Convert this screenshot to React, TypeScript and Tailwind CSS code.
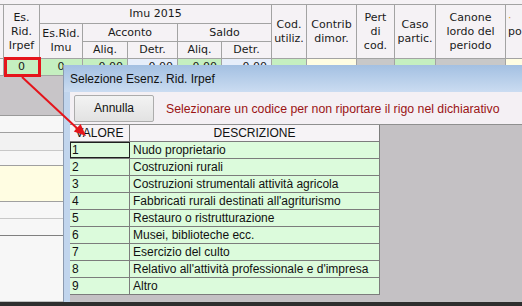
const head = "border-r border-b border-[#a3a3a3] bg-[#f5f2f5] flex flex-col items-center justify-center text-center leading-[14px]";

const rows = [
  { v: "1", d: "Nudo proprietario" },
  { v: "2", d: "Costruzioni rurali" },
  { v: "3", d: "Costruzioni strumentali attività agricola" },
  { v: "4", d: "Fabbricati rurali destinati all'agriturismo" },
  { v: "5", d: "Restauro o ristrutturazione" },
  { v: "6", d: "Musei, biblioteche ecc." },
  { v: "7", d: "Esercizio del culto" },
  { v: "8", d: "Relativo all'attività professionale e d'impresa" },
  { v: "9", d: "Altro" },
];

function Grid() {
  return (
    <div
      className="grid grid-cols-[4px_36px_43px_45px_50px_44px_50px_35px_50px_38px_41px_70px_1fr] grid-rows-[19px_18px_17px_17px] text-[11px] text-[#1a1a1a] font-['DejaVu_Sans',sans-serif]"
    >
      <div className={`${head} row-span-3`} />
      <div className={`${head} row-span-3`}>
        <span>Es.</span>
        <span>Rid.</span>
        <span>Irpef</span>
      </div>
      <div className={`${head} col-span-5`}>Imu 2015</div>
      <div className={`${head} row-span-3`}>
        <span>Cod.</span>
        <span>utiliz.</span>
      </div>
      <div className={`${head} row-span-3`}>
        <span>Contrib</span>
        <span>dimor.</span>
      </div>
      <div className={`${head} row-span-3`}>
        <span>Pert</span>
        <span>di</span>
        <span>cod.</span>
      </div>
      <div className={`${head} row-span-3`}>
        <span>Caso</span>
        <span>partic.</span>
      </div>
      <div className={`${head} row-span-3`}>
        <span>Canone</span>
        <span>lordo del</span>
        <span>periodo</span>
      </div>
      <div className={`${head} row-span-3 !items-start pl-[2px]`}>
        <span className="text-[#e0a030]">·</span>
        <span>po</span>
        <span>&nbsp;</span>
      </div>
      <div className={`${head} row-span-2`}>
        <span>Es.Rid.</span>
        <span>Imu</span>
      </div>
      <div className={`${head} col-span-2`}>Acconto</div>
      <div className={`${head} col-span-2`}>Saldo</div>
      <div className={head}>Aliq.</div>
      <div className={head}>Detr.</div>
      <div className={head}>Aliq.</div>
      <div className={head}>Detr.</div>

      {/* data row */}
      <div className="border-r border-b border-[#a3a3a3] bg-[#f2f2f2]" />
      <div className="border-r border-b border-[#a3a3a3] bg-[#c5efc0] flex items-center justify-center">0</div>
      <div className="border-r border-b border-[#a3a3a3] bg-[#c5efc0] flex items-center justify-center">0</div>
      <div className="border-r border-b border-[#a3a3a3] bg-[#c5efc0] flex items-center justify-end pr-1">0,00</div>
      <div className="border-r border-b border-[#a3a3a3] bg-[#e6eefa] flex items-center justify-end pr-1">0,00</div>
      <div className="border-r border-b border-[#a3a3a3] bg-[#c5efc0] flex items-center justify-end pr-1">0,00</div>
      <div className="border-r border-b border-[#a3a3a3] bg-[#e6eefa] flex items-center justify-end pr-1">0,00</div>
      <div className="border-r border-b border-[#a3a3a3] bg-[#c5efc0]" />
      <div className="border-r border-b border-[#a3a3a3] bg-[#fffde2]" />
      <div className="border-r border-b border-[#a3a3a3] bg-[#c8c8c8]" />
      <div className="border-r border-b border-[#a3a3a3] bg-[#c5efc0]" />
      <div className="border-r border-b border-[#a3a3a3] bg-[#c8c8c8]" />
      <div className="border-b border-[#a3a3a3] bg-[#fffde2]" />
    </div>
  );
}

function Dialog() {
  return (
    <div className="absolute left-[63px] top-[65px] right-0 bottom-[4px] flex border-l border-[#8c9bb0] bg-[#c1d5ed] font-['Liberation_Sans',sans-serif]">
      <div className="flex flex-col flex-1">
        <div className="h-[27px] shrink-0 bg-gradient-to-b from-[#a3c0e2] to-[#cbdcf1] flex items-center pl-[6px] text-[12px] text-[#111]">
          Selezione Esenz. Rid. Irpef
        </div>
        <div className="flex flex-1 pl-[6px]">
          <div className="flex flex-col flex-1">
            <div className="h-[32px] shrink-0 bg-[#f4f0f4] flex items-center pl-[4px] gap-[12px]">
              <div className="w-[80px] h-[27px] border border-[#acacac] rounded-[2px] bg-gradient-to-b from-[#f3f3f3] to-[#e2e2e2] flex items-center justify-center text-[12px] text-[#111]">
                Annulla
              </div>
              <span className="text-[12.3px] text-[#9b1414] mt-[3px]">
                Selezionare un codice per non riportare il rigo nel dichiarativo
              </span>
            </div>
            <div className="flex-1 bg-[#c4c1c4] border-t border-[#8f8f8f]">
              <div className="w-[310px] text-[12px] text-[#111]">
                <div className="flex h-[17px] bg-[#f6f3f6] border-b border-[#7c7c7c]">
                  <div className="w-[60px] border-r border-[#7c7c7c] flex items-center justify-center">VALORE</div>
                  <div className="flex-1 border-r border-[#7c7c7c] flex items-center justify-center">DESCRIZIONE</div>
                </div>
                {rows.map((r, i) => (
                  <div key={r.v} className="flex h-[17px] bg-[#dcfbdc] border-b border-[#7c7c7c]">
                    <div
                      className={`w-[60px] border-r border-[#7c7c7c] flex items-center pl-[2px] ${i === 0 ? "outline outline-1 outline-[#202020] -outline-offset-1" : ""}`}
                    >
                      {r.v}
                    </div>
                    <div className="flex-1 border-r border-[#7c7c7c] flex items-center pl-[3px]">{r.d}</div>
                  </div>
                ))}
              </div>
            </div>
          </div>
        </div>
      </div>
    </div>
  );
}

export default function App() {
  return (
    <div className="relative w-[522px] h-[306px] overflow-hidden bg-[#f7f7f7] flex flex-col">
      <div className="h-[5px] bg-[#f5f2f5] border-b border-[#a3a3a3]" />
      <Grid />
      {/* left area below grid */}
      <div className="flex-1 flex flex-col">
        <div className="h-[40px] bg-[#c8c5c8] border-b border-[#9a9a9a]" />
        <div className="h-[17px] bg-[#f7f7f7] border-b border-[#a0a0a0]" />
        <div className="h-[18px] bg-[#f2f2f2] border-b border-[#c8c8c8]" />
        <div className="h-[15px] bg-[#f7f7f7] border-b border-[#a0a0a0]" />
        <div className="h-[36px] bg-[#fffde2] border-b border-[#a0a0a0]" />
        <div className="h-[17px] bg-[#f7f7f7] border-b border-[#c8c8c8]" />
        <div className="h-[17px] bg-[#f7f7f7] border-b border-[#808080]" />
        <div className="flex-1 bg-[#f7f7f7] border-b border-[#c0c0c0]" />
      </div>
      <div className="h-[4px] bg-[#2e2e2e]" />

      <Dialog />

      {/* highlight of the edited cell */}
      <div className="absolute left-[4px] top-[57px] w-[37px] h-[20px] border-[3px] border-[#e5141b]" />
      <svg className="absolute left-0 top-0" width="522" height="306">
        <line x1="22" y1="77" x2="80" y2="131" stroke="#e5141b" strokeWidth="2" />
        <polygon points="86,136 73.8,131.5 80.6,124.1" fill="#e5141b" />
      </svg>
    </div>
  );
}
